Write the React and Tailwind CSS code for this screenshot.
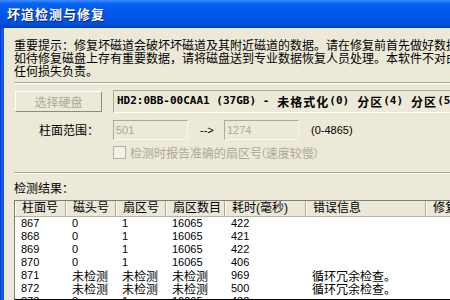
import React from "react";

const CJK = '"Noto Sans CJK SC", sans-serif';
const MIX = '"Liberation Sans", "Noto Sans CJK SC", sans-serif';
const MONO = '"DejaVu Sans Mono", monospace';

const rows = [
  ["867", "0", "1", "16065", "422", ""],
  ["868", "0", "1", "16065", "421", ""],
  ["869", "0", "1", "16065", "422", ""],
  ["870", "0", "1", "16065", "406", ""],
  ["871", "未检测", "未检测", "未检测", "969", "循环冗余检查。"],
  ["872", "未检测", "未检测", "未检测", "500", "循环冗余检查。"],
  ["873", "0", "1", "16065", "438", ""],
];

const headers = ["柱面号", "磁头号", "扇区号", "扇区数目", "耗时(毫秒)", "错误信息", "修复"];
const gridCols = "grid grid-cols-[51px_50px_50px_59px_81px_120px_80px]";

function Cell({ v }) {
  const numeric = /^[0-9]+$/.test(v);
  return (
    <div
      className={
        "pl-[6px] whitespace-nowrap overflow-hidden text-black " +
        (numeric ? "text-[11px]" : "text-[12px]")
      }
      style={{ fontFamily: numeric ? '"Liberation Sans", sans-serif' : CJK }}
    >
      {v}
    </div>
  );
}

function Sep() {
  return (
    <div className="w-[460px] shrink-0">
      <div className="h-px bg-[#ACA899]" />
      <div className="h-px bg-white" />
    </div>
  );
}

export default function App() {
  return (
    <div
      className="w-[450px] h-[300px] overflow-hidden bg-[#ECE9D8] flex flex-col"
      style={{ fontFamily: MIX }}
    >
      {/* Title bar */}
      <div className="h-[28px] shrink-0 flex items-center pl-[7px] bg-[linear-gradient(to_bottom,#3D8FFF_0%,#0A62F2_12%,#0058EA_45%,#0052E0_80%,#0040C4_100%)]">
        <span
          className="text-white font-bold text-[13px] tracking-[1px] [text-shadow:1px_1px_0_#0A1E6A]"
          style={{ fontFamily: CJK }}
        >
          坏道检测与修复
        </span>
      </div>

      <div className="flex flex-1 min-h-0">
        {/* left frame */}
        <div className="w-[4px] shrink-0 flex">
          <div className="w-px bg-[#0831D9]" />
          <div className="w-[3px] bg-[#0A5CEA]" />
        </div>

        <div className="flex-1 min-w-0 pl-[10px] flex flex-col">
          {/* Notice */}
          <div
            className="pt-[10px] text-[12px] leading-[13px] text-black whitespace-nowrap"
            style={{ fontFamily: CJK }}
          >
            <div>重要提示：修复坏磁道会破坏坏磁道及其附近磁道的数据。请在修复前首先做好数据备份，</div>
            <div>如待修复磁盘上存有重要数据，请将磁盘送到专业数据恢复人员处理。本软件不对由此造成的</div>
            <div>任何损失负责。</div>
          </div>

          <div className="mt-[5px]">
            <Sep />
          </div>

          {/* Disk row */}
          <div className="mt-[6px] flex items-start">
            <div
              className="shrink-0 mt-px ml-px w-[87px] h-[21px] flex items-center justify-center border border-t-white border-l-white border-b-[#8C8A7E] border-r-[#8C8A7E] bg-[#ECE9D8] text-[12px] text-[#ACA899]"
              style={{ fontFamily: CJK }}
            >
              选择硬盘
            </div>
            <div className="shrink-0 ml-[11px] w-[400px] h-[23px] border border-t-[#ACA899] border-l-[#ACA899] border-b-white border-r-white flex items-center pl-[3px] whitespace-nowrap overflow-hidden font-bold text-black">
              <span className="text-[11px]" style={{ fontFamily: MONO }}>
                HD2:0BB-00CAA1 (37GB) -
              </span>
              <span className="text-[12px] tracking-[1px] ml-[8px]" style={{ fontFamily: CJK }}>未格式化</span>
              <span className="text-[11px]" style={{ fontFamily: MONO }}>(0)</span>
              <span className="text-[12px] tracking-[1px] ml-[8px]" style={{ fontFamily: CJK }}>分区</span>
              <span className="text-[11px]" style={{ fontFamily: MONO }}>(4)</span>
              <span className="text-[12px] tracking-[1px] ml-[8px]" style={{ fontFamily: CJK }}>分区</span>
              <span className="text-[11px]" style={{ fontFamily: MONO }}>(5)</span>
            </div>
          </div>

          {/* Cylinder range */}
          <div className="mt-[7px] flex items-center h-[20px]">
            <div
              className="shrink-0 w-[99px] pr-[14px] text-right text-[12px] text-black"
              style={{ fontFamily: CJK }}
            >
              柱面范围：
            </div>
            <div className="shrink-0 w-[75px] h-[20px] border border-t-[#ACA899] border-l-[#ACA899] border-b-[#F5F4EE] border-r-[#F5F4EE] bg-[#ECE9D8] flex items-center pl-[2px] text-[11px] text-[#ACA899]">
              501
            </div>
            <div className="shrink-0 w-[36px] pl-[12px] text-[11px] text-black">--&gt;</div>
            <div className="shrink-0 w-[75px] h-[20px] border border-t-[#ACA899] border-l-[#ACA899] border-b-[#F5F4EE] border-r-[#F5F4EE] bg-[#ECE9D8] flex items-center pl-[2px] text-[11px] text-[#ACA899]">
              1274
            </div>
            <div className="shrink-0 pl-[12px] text-[11px] text-black">(0-4865)</div>
          </div>

          {/* checkbox */}
          <div className="mt-[6px] ml-[99px] flex items-center h-[13px]">
            <div className="shrink-0 w-[13px] h-[13px] border border-[#B5B2A3] bg-[#F3F2EC]" />
            <span className="ml-[4px] text-[12px] text-[#ACA899]" style={{ fontFamily: CJK }}>
              检测时报告准确的扇区号
            </span>
            <span className="text-[11px] text-[#ACA899]">(</span>
            <span className="text-[12px] text-[#ACA899]" style={{ fontFamily: CJK }}>速度较慢</span>
            <span className="text-[11px] text-[#ACA899]">)</span>
          </div>

          <div className="mt-[13px]">
            <Sep />
          </div>

          <div
            className="mt-[7px] text-[12px] leading-[14px] text-black"
            style={{ fontFamily: CJK }}
          >
            检测结果：
          </div>

          {/* Table */}
          <div className="mt-[5px] w-[480px] shrink-0 flex-1 border border-t-[#7F7C70] border-l-[#7F7C70] bg-white overflow-hidden">
            <div className={gridCols + " h-[16px] bg-[#EBE8D8] border-b border-[#B8B4A2]"}>
              {headers.map((h, i) => (
                <div
                  key={i}
                  className="pl-[6px] text-[12px] leading-[15px] text-black whitespace-nowrap overflow-hidden border-l border-l-white border-r border-r-[#ACA899]"
                  style={{ fontFamily: MIX }}
                >
                  {h}
                </div>
              ))}
            </div>
            {rows.map((r, i) => (
              <div key={i} className={gridCols + " h-[13px] items-center leading-[13px]"}>
                {r.map((v, j) => (
                  <Cell key={j} v={v} />
                ))}
                <div />
              </div>
            ))}
          </div>
        </div>
      </div>
    </div>
  );
}
